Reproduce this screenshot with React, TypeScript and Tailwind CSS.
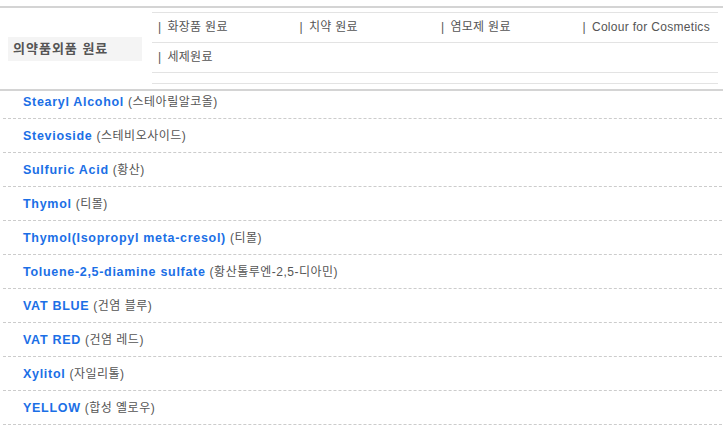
import React from 'react';

interface Item {
  en: string;
  ko: string;
}

const items: Item[] = [
  { en: 'Stearyl Alcohol', ko: '(스테아릴알코올)' },
  { en: 'Stevioside', ko: '(스테비오사이드)' },
  { en: 'Sulfuric Acid', ko: '(황산)' },
  { en: 'Thymol', ko: '(티몰)' },
  { en: 'Thymol(Isopropyl meta-cresol)', ko: '(티몰)' },
  { en: 'Toluene-2,5-diamine sulfate', ko: '(황산톨루엔-2,5-디아민)' },
  { en: 'VAT BLUE', ko: '(건염 블루)' },
  { en: 'VAT RED', ko: '(건염 레드)' },
  { en: 'Xylitol', ko: '(자일리톨)' },
  { en: 'YELLOW', ko: '(합성 옐로우)' },
];

const menuRow1 = ['화장품 원료', '치약 원료', '염모제 원료', 'Colour for Cosmetics'];
const menuRow2 = ['세제원료'];

const font = { fontFamily: '"Liberation Sans", "Noto Sans CJK KR", sans-serif' };

const MenuRow = ({ labels }: { labels: string[] }) => (
  <div className="flex h-[30px] items-center border-b border-[#e3e3e3] pb-[1px]">
    {labels.map((label) => (
      <div key={label} className="w-[142px] pl-[6px] text-[12px] tracking-[0.3px] text-[#555]">
        <span className="mr-[6px]">|</span>
        {label}
      </div>
    ))}
  </div>
);

const App: React.FC = () => {
  return (
    <div className="w-[723px] bg-white pt-[6px]" style={font}>
      {/* category header */}
      <div className="flex border-y-2 border-[#d4d4d4]">
        <div className="flex w-[152px] items-center pl-[8px] pr-[10px]">
          <div className="flex h-[24px] w-full items-center bg-[#f4f4f4] pl-[5px] text-[13px] font-bold tracking-[1px] text-[#555]">
            의약품외품 원료
          </div>
        </div>
        <div className="w-[566px] pb-[5px] pt-[4px]">
          <div className="border-b border-[#e3e3e3]" />
          <MenuRow labels={menuRow1} />
          <MenuRow labels={menuRow2} />
          <div className="h-[11px] border-b border-[#e3e3e3]" />
        </div>
      </div>

      {/* product list */}
      <ul className="ml-[3px] w-[719px]">
        {items.map((item, i) => (
          <li
            key={item.en}
            className={`flex items-center border-b border-dashed border-[#cccccc] pl-[20px] leading-[14px] ${i === 0 ? 'h-[28px] pb-[5px]' : 'h-[34px]'}`}
          >
            <span className="text-[12.5px] font-bold tracking-[0.7px] text-[#1b6fe6]">{item.en}</span>
            <span className="ml-[4px] text-[12px] tracking-[0.5px] text-[#555]">{item.ko}</span>
          </li>
        ))}
      </ul>
    </div>
  );
};

export default App;
